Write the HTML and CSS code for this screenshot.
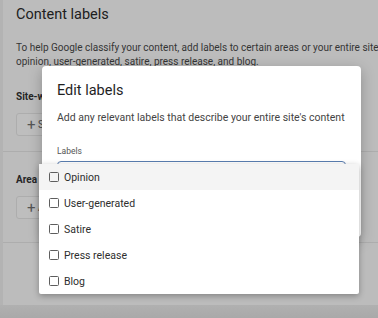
FILE: index.html
```html
<!DOCTYPE html>
<html lang="en">
<head>
    <meta charset="UTF-8">
    <meta name="viewport" content="width=device-width, initial-scale=1.0">
    <title>Content labels</title>

    <link rel="stylesheet" href="styles.css">

</head>
<body>

  <div class="page">
    <h1 class="page__title">Content labels</h1>
    <p class="page__intro">To help Google classify your content, add labels to certain areas or your entire site: opinion, user-generated, satire, press release, and blog.</p>

    <section class="group group--site">
      <h2 class="group__title">Site-wide labels</h2>
      <button class="add-btn"><span class="add-btn__plus">+</span> Site-wide label</button>
    </section>

    <section class="group group--area">
      <h2 class="group__title">Area of site labels</h2>
      <button class="add-btn"><span class="add-btn__plus">+</span> Area of site label</button>
    </section>

    <div class="page__footer"></div>
  </div>

  <!-- dialog sits over the dimmed page -->
  <div class="dialog">
    <h3 class="dialog__title">Edit labels</h3>
    <p class="dialog__text">Add any relevant labels that describe your entire site's content</p>
    <div class="field">
      <span class="field__label">Labels</span>
      <div class="field__box"></div>
    </div>
  </div>

  <ul class="menu">
    <li class="menu__item menu__item--active"><span class="check"></span>Opinion</li>
    <li class="menu__item"><span class="check"></span>User-generated</li>
    <li class="menu__item"><span class="check"></span>Satire</li>
    <li class="menu__item"><span class="check"></span>Press release</li>
    <li class="menu__item"><span class="check"></span>Blog</li>
  </ul>

</body>
</html>
```

FILE: styles.css
```css
*,
*::before,
*::after {
  box-sizing: border-box;
}

body {
  margin: 0;
  height: 318px;
  overflow: hidden;
  font-family: Roboto, "Liberation Sans", sans-serif;
  background: #bcbcbc;
  color: #222;
  position: relative;
}

.page {
  height: 100%;
  padding: 7px 0 0 13px;
  border-left: 3px solid #b3b3b3;
  display: flex;
  flex-direction: column;
  white-space: nowrap;
}

.page__title {
  margin: 0;
  font-size: 14.5px;
  font-weight: 400;
  line-height: 16px;
  color: #202020;
}

.page__intro {
  margin: 18px 0 0;
  font-size: 10px;
  line-height: 14px;
  color: #353535;
  white-space: normal;
  width: 400px;
}

.group {
  border-bottom: 1px solid #adadad;
  margin-left: -13px;
  padding-left: 13px;
}

/* title / button / divider spacing read off the screenshot */
.group--site {
  padding-top: 21px;
  padding-bottom: 15px;
}

.group--area {
  padding-top: 21px;
  padding-bottom: 23px;
}

.group__title {
  margin: 0;
  font-size: 10px;
  font-weight: 700;
  line-height: 14px;
  color: #262626;
}

.add-btn {
  display: block;
  margin-top: 9px;
  height: 23px;
  padding: 0 10px;
  font-family: inherit;
  font-size: 10px;
  color: #444;
  background: #bebebe;
  border: 1px solid #adadad;
  border-radius: 3px;
}

.add-btn__plus {
  font-size: 15px;
  vertical-align: -2px;
  color: #555;
}

.page__footer {
  margin-top: auto;
  margin-left: -16px;
  height: 13px;
  background: linear-gradient(#b0b0b0, #a9a9a9);
}

.dialog {
  position: absolute;
  left: 42px;
  top: 66px;
  width: 319px;
  height: 171px;
  padding: 17px 15px 0;
  background: white;
  border-radius: 4px;
  box-shadow: 0 4px 14px rgba(0, 0, 0, 0.25);
}

.dialog__title {
  margin: 0;
  font-size: 14.5px;
  font-weight: 400;
  line-height: 16px;
  color: #1f1f1f;
}

.dialog__text {
  margin: 12px 0 0;
  font-size: 10.5px;
  line-height: 14px;
  color: #444;
  white-space: nowrap;
}

.field {
  margin-top: 20px;
}

.field__label {
  display: block;
  font-size: 8.5px;
  line-height: 12px;
  color: #555;
}

.field__box {
  margin-top: 4px;
  height: 20px;
  border: 1.5px solid #5a7db0;
  border-radius: 4px;
}

.menu {
  position: absolute;
  left: 39px;
  top: 164px;
  width: 320px;
  margin: 0;
  padding: 0;
  list-style: none;
  background: white;
  border-radius: 2px;
  box-shadow: 0 2px 6px rgba(0, 0, 0, 0.3);
}

.menu__item {
  height: 26px;
  display: flex;
  align-items: center;
  gap: 5px;
  padding-left: 10px;
  font-size: 10.5px;
  color: #2e2e2e;
}

.menu__item--active {
  background: #f4f4f4;
}

.check {
  width: 10px;
  height: 10px;
  border: 1.3px solid #5e5e5e;
  border-radius: 1.5px;
}
```
